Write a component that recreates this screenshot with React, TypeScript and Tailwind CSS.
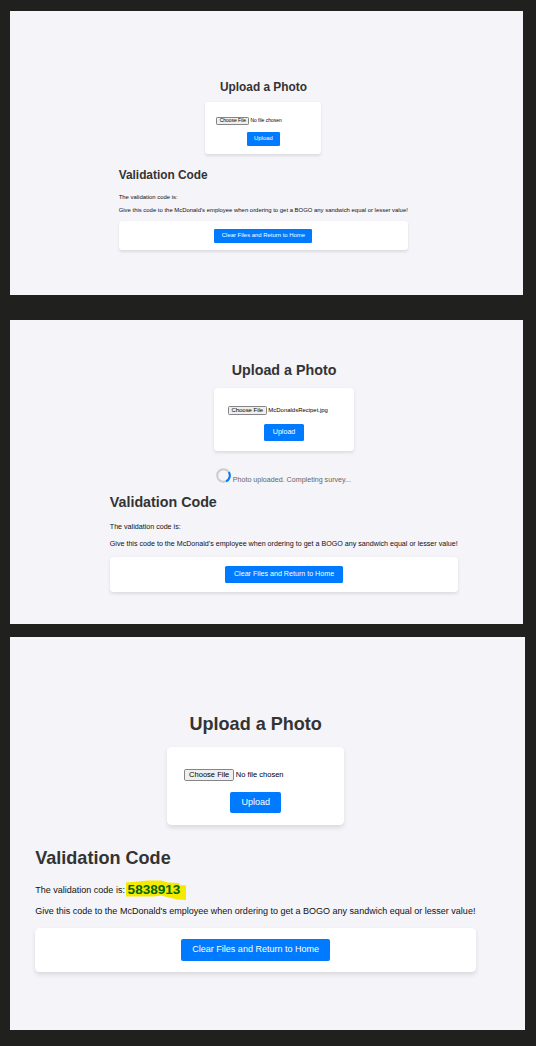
import type { ReactNode } from "react";

function UploadCard({ fileName }: { fileName: string }) {
  return (
    <form className="flex h-[8.84em] w-[19.9em] flex-col items-center self-center rounded-[0.5em] bg-white pt-[2.5em] shadow-[0_0.25em_0.5em_rgba(0,0,0,0.1)]">
      <div className="flex h-[1.32em] w-full items-center pl-[1.9em]">
        <span className="flex h-[1.32em] w-[5.63em] shrink-0 items-center justify-center rounded-[0.2em] border border-[#858585] bg-[#efefef]">
          <span className="pt-[0.14em] text-[0.85em] leading-none whitespace-nowrap text-black">Choose File</span>
        </span>
        <span className="ml-[0.22em] pt-[0.14em] text-[0.85em] leading-none whitespace-nowrap text-black">{fileName}</span>
      </div>
      <button
        type="button"
        className="mt-[1.28em] flex h-[2.42em] w-[5.74em] items-center justify-center rounded-[0.22em] bg-[#007bff] text-white"
      >
        <span className="text-[1.0175em] leading-none">Upload</span>
      </button>
    </form>
  );
}

function HighlightedCode({ code }: { code: string }) {
  return (
    <span className="relative ml-[0.3em] inline-block">
      <svg
        className="absolute -top-[4px] -left-[2px] h-[20px] w-[61px]"
        viewBox="0 0 61 20"
        aria-hidden="true"
      >
        <path
          d="M0 2.5 L9 1.8 L22 .6 L35 .6 L42 2.6 L53 3 L54 5 L60 5.6 L60 20 L51 19.4 L43 17.4 L35 15.6 L28 16.6 L0 16.6Z"
          fill="#f5e900"
        />
      </svg>
      <span className="relative -top-px block text-[1.5em] leading-none font-bold text-[#006400]">{code}</span>
    </span>
  );
}

function Screen({
  frame,
  content,
  fileName,
  status,
  code,
}: {
  frame: string;
  content: string;
  fileName: string;
  status?: ReactNode;
  code?: string;
}) {
  return (
    <section className={`overflow-hidden bg-[#f4f4f9] ${frame}`}>
      <div className={`flex flex-col ${content}`}>
        <h1 className="h-[1.13em] self-center text-[2.035em] leading-[1.13] font-bold whitespace-nowrap text-[#333]">
          Upload a Photo
        </h1>
        <div className="mt-[1.43em] flex flex-col">
          <UploadCard fileName={fileName} />
        </div>
        {status}
        <h2 className="mt-[1.351em] h-[0.983em] text-[2.035em] leading-[0.983] font-bold whitespace-nowrap text-[#333]">
          Validation Code
        </h2>
        <p className="mt-[2.04em] flex h-[1.13em] items-center text-[1.0175em] whitespace-nowrap text-[#111]">
          The validation code is:
          {code && <HighlightedCode code={code} />}
        </p>
        <p className="mt-[1.12em] h-[1.13em] text-[1.0175em] leading-[1.13] whitespace-nowrap text-[#111]">
          Give this code to the McDonald's employee when ordering to get a BOGO any sandwich equal or lesser value!
        </p>
        <div className="mt-[1.315em] flex h-[4.94em] items-center justify-center rounded-[0.5em] bg-white shadow-[0_0.25em_0.5em_rgba(0,0,0,0.1)]">
          <button
            type="button"
            className="flex h-[2.42em] w-[16.8em] items-center justify-center rounded-[0.22em] bg-[#007bff] whitespace-nowrap text-white"
          >
            <span className="text-[1.0175em] leading-none">Clear Files and Return to Home</span>
          </button>
        </div>
      </div>
    </section>
  );
}

function UploadStatus() {
  return (
    <div className="flex h-[3.58em] w-[19.4em] items-start self-center pt-[2.5em] pl-[0.03em]">
      <svg className="h-[15px] w-[15px] shrink-0" viewBox="0 0 15 15" fill="none" strokeWidth="2" aria-hidden="true">
        <circle cx="7.5" cy="7.5" r="6.3" stroke="#ccc" />
        <path d="M12.8 4.1 A6.3 6.3 0 0 1 10 13.3" stroke="#007bff" />
      </svg>
      <span className="mt-[1.1em] ml-[0.22em] text-[1.0175em] leading-[1.13] whitespace-nowrap text-[#666]">
        Photo uploaded. Completing survey...
      </span>
    </div>
  );
}

export default function App() {
  return (
    <main className="flex h-[1046px] w-[536px] flex-col bg-[#20201e] pt-[11px] pl-[10px] font-['Liberation_Sans',Arial,sans-serif]">
      <Screen
        frame="h-[284px] w-[513px]"
        content="ml-[108.7px] w-[289.5px] pt-[69.7px] text-[5.83px]"
        fileName="No file chosen"
      />
      <Screen
        frame="mt-[25px] h-[304px] w-[513px]"
        content="ml-[99.8px] w-[348.5px] pt-[42.3px] text-[7.02px]"
        fileName="McDonaldsRecipet.jpg"
        status={<UploadStatus />}
      />
      <Screen
        frame="mt-[13px] h-[393px] w-[515px]"
        content="ml-[25.2px] w-[441px] pt-[76.6px] text-[8.88px]"
        fileName="No file chosen"
        code="5838913"
      />
    </main>
  );
}
